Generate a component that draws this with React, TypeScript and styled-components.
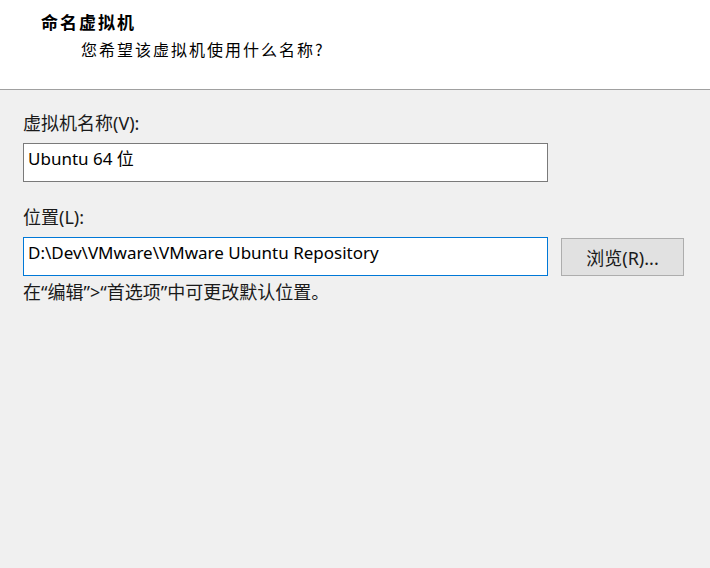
import styled, { createGlobalStyle } from "styled-components";

const Global = createGlobalStyle`
  html, body {
    margin: 0;
    padding: 0;
    background: #f0f0f0;
  }
  body {
    font-family: "Noto Sans", "Noto Sans CJK SC", sans-serif;
    color: #000;
  }
`;

const Page = styled.div`
  width: 710px;
  height: 568px;
  display: flex;
  flex-direction: column;
  background: #f0f0f0;
  overflow: hidden;
`;

const Header = styled.div`
  height: 90px;
  flex-shrink: 0;
  background: #fff;
  border-bottom: 1px solid #a0a0a0;
  padding: 11px 0 0 41px;
  box-sizing: border-box;
`;

const Title = styled.div`
  font-family: "Noto Sans CJK SC", sans-serif;
  font-weight: 700;
  font-size: 17px;
  letter-spacing: 2px;
  line-height: 22px;
`;

const SubTitle = styled.div`
  font-family: "Noto Sans CJK SC", sans-serif;
  font-size: 16px;
  letter-spacing: 2px;
  line-height: 22px;
  margin: 5px 0 0 40px;
`;

const Body = styled.div`
  padding: 22px 0 0 23px;
  display: flex;
  flex-direction: column;
`;

const Label = styled.div`
  font-size: 18px;
  line-height: 22px;
  height: 22px;
  color: #1a1a1a;
`;

const Row = styled.div`
  display: flex;
  align-items: center;
  gap: 13px;
  margin-top: 9px;
`;

const Field = styled.div<{ $focused?: boolean }>`
  width: 525px;
  height: 39px;
  box-sizing: border-box;
  background: #fff;
  border: 1px solid ${(p) => (p.$focused ? "#0078d7" : "#7a7a7a")};
  padding: 4px 4px 0;
  font-size: 17px;
  line-height: 22px;
  white-space: nowrap;
  overflow: hidden;
`;

const Button = styled.div`
  width: 123px;
  height: 38px;
  box-sizing: border-box;
  background: #e1e1e1;
  border: 1px solid #adadad;
  display: flex;
  align-items: center;
  justify-content: center;
  font-size: 18px;
  color: #1a1a1a;
`;

const Gap = styled.div<{ $h: number }>`
  height: ${(p) => p.$h}px;
`;

const Hint = styled.div`
  font-size: 18px;
  line-height: 22px;
  margin-top: 5px;
  color: #1a1a1a;
`;

export default function App() {
  return (
    <>
      <Global />
      <Page>
        <Header>
          <Title>命名虚拟机</Title>
          <SubTitle>您希望该虚拟机使用什么名称?</SubTitle>
        </Header>
        <Body>
          <Label>虚拟机名称(V):</Label>
          <Row>
            <Field>Ubuntu 64 位</Field>
          </Row>
          <Gap $h={24} />
          <Label>位置(L):</Label>
          <Row>
            <Field $focused>D:\Dev\VMware\VMware Ubuntu Repository</Field>
            <Button>浏览(R)...</Button>
          </Row>
          <Hint>在“编辑”&gt;“首选项”中可更改默认位置。</Hint>
        </Body>
      </Page>
    </>
  );
}
